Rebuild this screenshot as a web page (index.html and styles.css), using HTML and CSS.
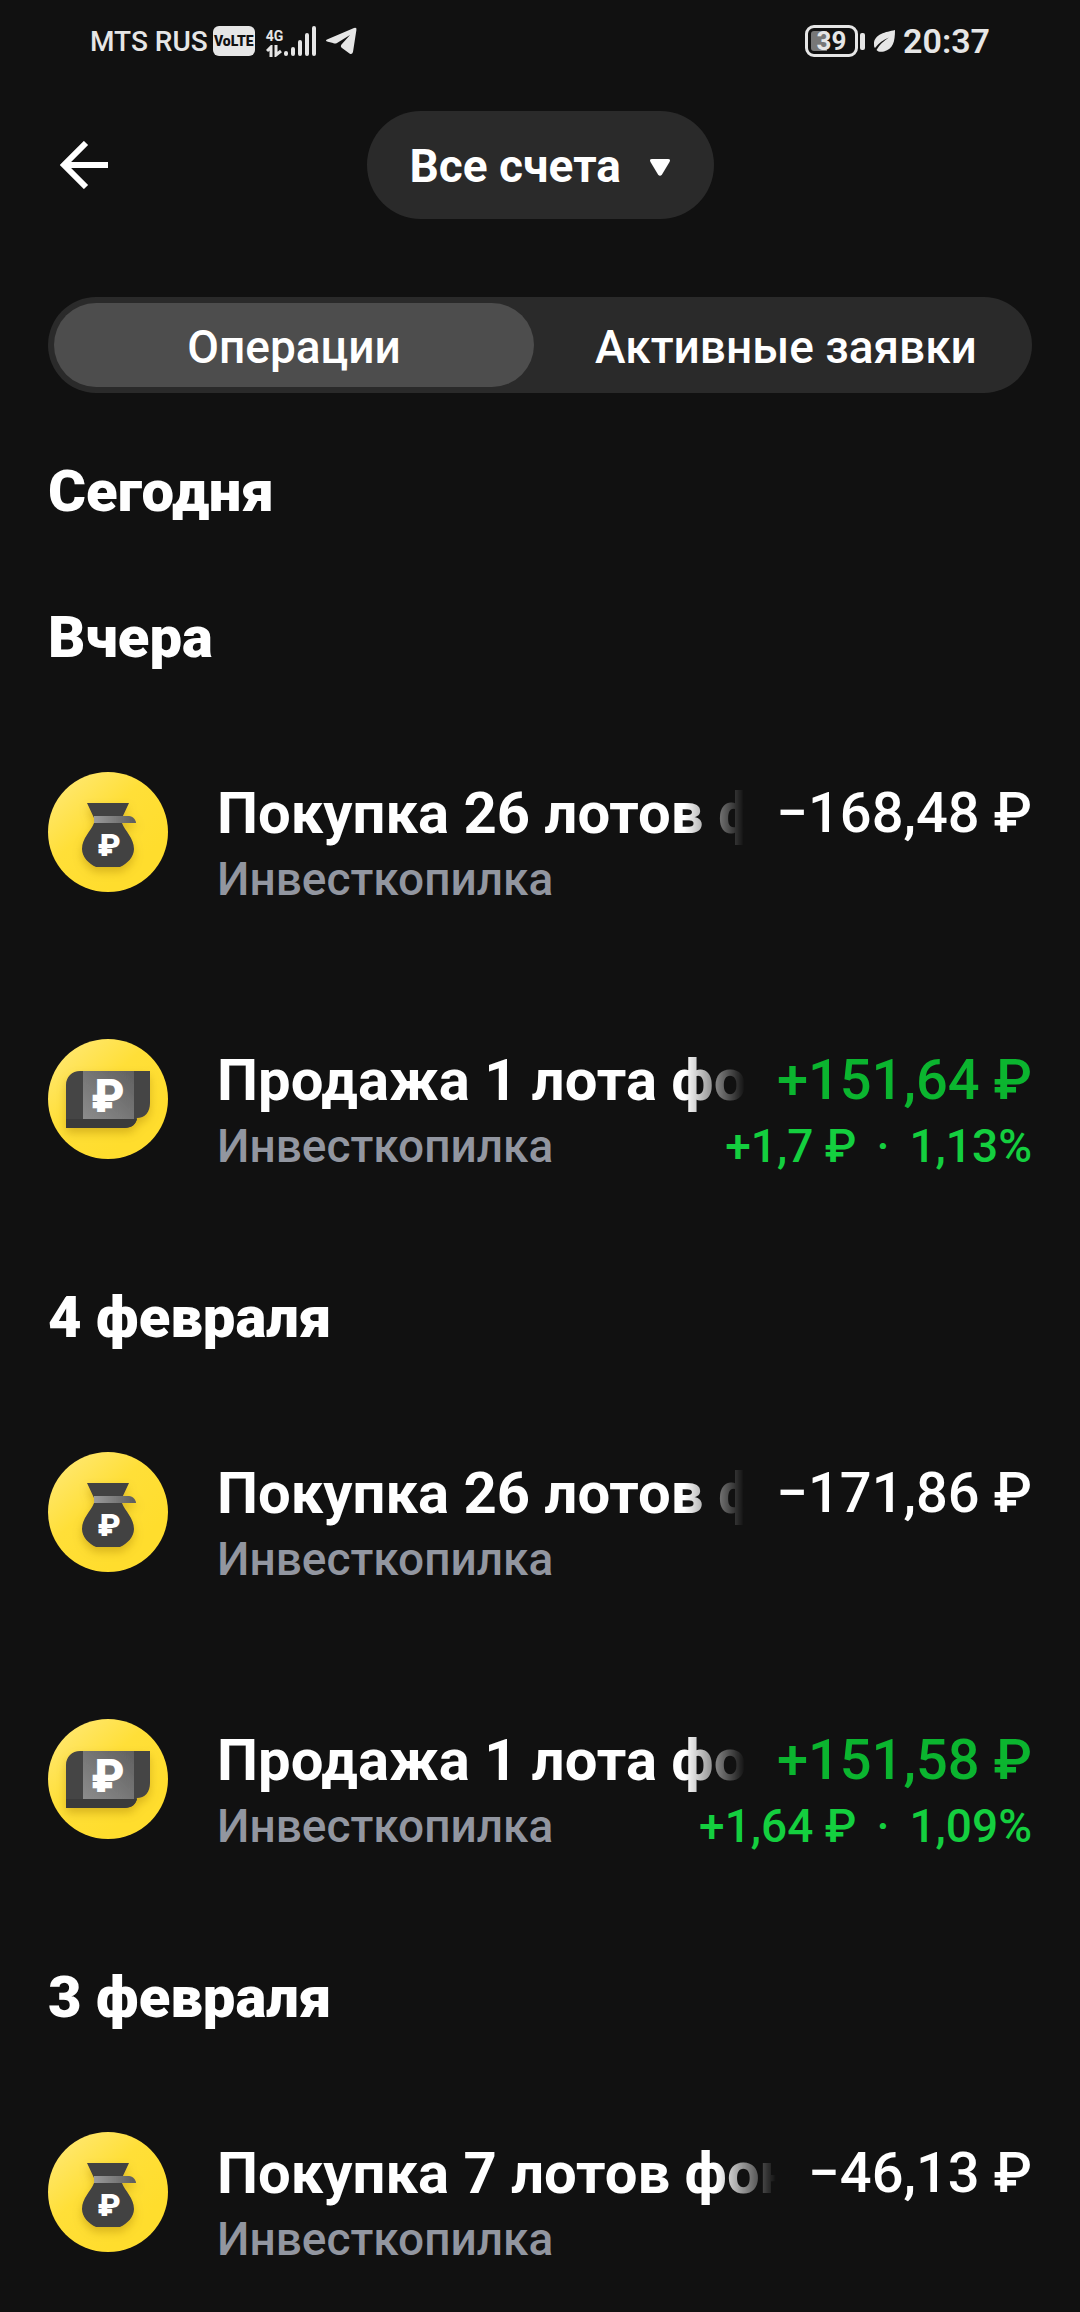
FILE: index.html
```
<!DOCTYPE html>
<html lang="ru">
<head>
  <meta charset="UTF-8" />
  <meta name="viewport" content="width=device-width, initial-scale=1.0"/>
  <title>Операции</title>
  <link rel="stylesheet" href="styles.css">
</head>
<body>

  <!-- Shared icons -->
  <svg class="sprite" aria-hidden="true">
    <defs>
      <linearGradient id="gold" x1="0" y1="0" x2="0.7" y2="0.8">
        <stop offset="0" stop-color="#ffea80"/>
        <stop offset="0.55" stop-color="#ffdf38"/>
        <stop offset="1" stop-color="#ffdd2d"/>
      </linearGradient>
      <linearGradient id="steel" x1="0" y1="0" x2="1" y2="0">
        <stop offset="0" stop-color="#9b9b9b"/>
        <stop offset="1" stop-color="#5c5c5c"/>
      </linearGradient>
      <linearGradient id="band" x1="0" y1="1" x2="1" y2="0">
        <stop offset="0" stop-color="#8c8c8c"/>
        <stop offset="1" stop-color="#606060"/>
      </linearGradient>
      <filter id="soft" x="-30%" y="-30%" width="160%" height="160%">
        <feDropShadow dx="0" dy="5" stdDeviation="5" flood-color="#a07800" flood-opacity="0.4"/>
      </filter>
    </defs>
    <symbol id="bag" viewBox="0 0 120 120">
      <circle cx="60" cy="60" r="60" fill="url(#gold)"/>
      <g filter="url(#soft)">
        <path d="M39 31H81L74 46V51C77 59 86 66 86 77C86 85 79 92 72 95H48C41 92 34 85 34 77C34 66 43 59 46 51V46Z" fill="#424242"/>
        <path d="M46 44H81C85 44 88 48 88 51H46Z" fill="url(#steel)"/>
      </g>
      <text x="61" y="84" class="coin coin-small">₽</text>
    </symbol>
    <symbol id="cash" viewBox="0 0 120 120">
      <circle cx="60" cy="60" r="60" fill="url(#gold)"/>
      <g filter="url(#soft)">
        <path d="M32 32H102V64C102 73 97 79 89 79C88 85 84 89 76 89H18V46C18 38 24 32 32 32Z" fill="#454545"/>
        <path d="M18 80H89C88 85 84 89 76 89H18Z" fill="#3b3b3b"/>
        <path d="M35 32H86V80H35Z" fill="url(#band)"/>
      </g>
      <text x="60" y="73" class="coin coin-large">₽</text>
    </symbol>
  </svg>

  <div class="status-bar">
    <div class="status-group">
      <span class="carrier">MTS RUS</span>
      <span class="volte">VoLTE</span>
      <div class="network">
        <div class="network-data">
          <span class="network-type">4G</span>
          <svg class="arrows" viewBox="0 0 16 12" fill="none" stroke="#e6e6e6" stroke-width="3"><path d="M1 6L5 2V12M10 0V10L15 6"/></svg>
        </div>
        <svg class="signal" viewBox="0 0 34 32" fill="none" stroke="#e6e6e6" stroke-width="4" stroke-linecap="round"><path d="M3 28V29M10 24V29M17 17V29M24 10V29M31 3V29"/></svg>
      </div>
      <svg class="telegram" viewBox="0 0 32 28"><path d="M2 12.500L29 1Q32 0 31.400 3L28 25Q27 28 24.500 26.500L17 21Q15 19.500 16.500 17.500L25 8L12 16Q10 17 8 16L2 14.500Q0 13.500 2 12.500Z" fill="#e6e6e6"/></svg>
    </div>
    <div class="status-group">
      <span class="battery">39</span>
      <span class="battery-tip"></span>
      <svg class="leaf" viewBox="0 0 22 24"><path d="M22 1C13 3 1 5 1 15C1 17 1 18 2 19C6 14 10 11 16 8.500C11 12 7 15 3.500 21C5 23 8 23 11 22.500C20 20 22 13 22 1Z" fill="#e6e6e6"/></svg>
      <span class="clock">20:37</span>
    </div>
  </div>

  <header>
    <button class="back" aria-label="Назад">
      <svg viewBox="0 0 48 48" fill="none" stroke="#fff" stroke-width="6"><path d="M48 24H5M26 2L4 24L26 46"/></svg>
    </button>
    <div class="account">
      <select class="account-select" aria-label="Счёт">
        <option>Все счета</option>
      </select>
      <svg class="account-arrow" viewBox="0 0 20 17"><path d="M2 0H18Q21 0 19.500 3L12 15.500Q10 18 8 15.500L0.500 3Q-1 0 2 0Z" fill="#fff"/></svg>
    </div>
  </header>

  <nav class="tabs" role="tablist">
    <button class="tab active" role="tab" aria-selected="true">Операции</button>
    <button class="tab" role="tab" aria-selected="false">Активные заявки</button>
  </nav>

  <main>
    <!-- Today -->
    <section>
      <h2>Сегодня</h2>
    </section>

    <!-- Yesterday -->
    <section>
      <h2>Вчера</h2>
      <div class="operation">
        <svg class="icon"><use href="#bag"/></svg>
        <div class="details">
          <div class="line">
            <span class="name">Покупка 26 лотов фонда</span>
            <span class="amount">−168,48 ₽</span>
          </div>
          <div class="line">
            <span class="source">Инвесткопилка</span>
          </div>
        </div>
      </div>
      <div class="operation">
        <svg class="icon"><use href="#cash"/></svg>
        <div class="details">
          <div class="line">
            <span class="name">Продажа 1 лота фонда</span>
            <span class="amount income">+151,64 ₽</span>
          </div>
          <div class="line">
            <span class="source">Инвесткопилка</span>
            <span class="profit"><span>+1,7 ₽</span><span>·</span><span>1,13%</span></span>
          </div>
        </div>
      </div>
    </section>

    <!-- 4 February -->
    <section>
      <h2>4 февраля</h2>
      <div class="operation">
        <svg class="icon"><use href="#bag"/></svg>
        <div class="details">
          <div class="line">
            <span class="name">Покупка 26 лотов фонда</span>
            <span class="amount">−171,86 ₽</span>
          </div>
          <div class="line">
            <span class="source">Инвесткопилка</span>
          </div>
        </div>
      </div>
      <div class="operation">
        <svg class="icon"><use href="#cash"/></svg>
        <div class="details">
          <div class="line">
            <span class="name">Продажа 1 лота фонда</span>
            <span class="amount income">+151,58 ₽</span>
          </div>
          <div class="line">
            <span class="source">Инвесткопилка</span>
            <span class="profit"><span>+1,64 ₽</span><span>·</span><span>1,09%</span></span>
          </div>
        </div>
      </div>
    </section>

    <!-- 3 February -->
    <section>
      <h2>3 февраля</h2>
      <div class="operation">
        <svg class="icon"><use href="#bag"/></svg>
        <div class="details">
          <div class="line">
            <span class="name">Покупка 7 лотов фонда</span>
            <span class="amount">−46,13 ₽</span>
          </div>
          <div class="line">
            <span class="source">Инвесткопилка</span>
          </div>
        </div>
      </div>
    </section>
  </main>

</body>
</html>
```
FILE: styles.css
```
* {
  margin: 0;
  padding: 0;
  box-sizing: border-box;
}

body {
  font-family: Roboto, 'Noto Sans', sans-serif;
  background-color: #111111;
  color: #ffffff;
  overflow-x: hidden;
}

button,
select {
  font-family: inherit;
  color: inherit;
  border: none;
  cursor: pointer;
}

.sprite {
  position: absolute;
  width: 0;
  height: 0;
}

.coin {
  font-family: Roboto, sans-serif;
  font-weight: 900;
  fill: #ffffff;
  text-anchor: middle;
}

.coin-small {
  font-size: 32px;
}

.coin-large {
  font-size: 46px;
}

/* Status bar */
.status-bar {
  display: flex;
  justify-content: space-between;
  align-items: center;
  height: 82px;
  padding: 0 90px;
  color: #e6e6e6;
}

.status-group {
  display: flex;
  align-items: center;
}

.carrier {
  font-size: 28px;
  font-weight: 500;
}

.volte {
  margin-left: 5px;
  width: 42px;
  border-radius: 6px;
  background-color: #e6e6e6;
  color: #111111;
  font-size: 14px;
  font-weight: 900;
  line-height: 30px;
  text-align: center;
}

.network {
  display: flex;
  align-items: flex-end;
  margin-left: 11px;
}

.network-data {
  display: flex;
  flex-direction: column;
  width: 17px;
}

.network-type {
  font-size: 14px;
  font-weight: 700;
  line-height: 18px;
}

.arrows {
  width: 16px;
  height: 12px;
}

.signal {
  width: 34px;
  height: 32px;
}

.telegram {
  margin-left: 8px;
  width: 32px;
  height: 28px;
}

.battery {
  width: 53px;
  border: 3px solid #e6e6e6;
  border-radius: 9px;
  background: linear-gradient(to right, #777777 16px, transparent 16px) no-repeat content-box;
  padding: 3px;
  font-size: 26px;
  font-weight: 700;
  line-height: 20px;
  text-align: center;
}

.battery-tip {
  margin-left: 2px;
  width: 5px;
  height: 17px;
  border-radius: 2px;
  background-color: #e6e6e6;
}

.leaf {
  margin: 0 8px;
  width: 22px;
  height: 24px;
}

.clock {
  font-size: 34px;
  font-weight: 600;
}

/* Header */
header {
  display: flex;
  justify-content: center;
  align-items: center;
  position: relative;
  height: 166px;
}

.back {
  position: absolute;
  left: 60px;
  width: 48px;
  height: 48px;
  background: none;
}

.back svg {
  display: block;
}

.account {
  position: relative;
}

.account-select {
  appearance: none;
  height: 108px;
  padding: 2px 92px 0 43px;
  border-radius: 54px;
  background-color: #2a2a2a;
  font-size: 46px;
  font-weight: 700;
}

.account-arrow {
  position: absolute;
  top: 48px;
  right: 44px;
  width: 20px;
  height: 17px;
  pointer-events: none;
}

/* Tabs */
.tabs {
  display: flex;
  gap: 12px;
  margin: 49px 48px 25px;
  padding: 6px;
  border-radius: 48px;
  background-color: #2a2a2a;
}

.tab {
  flex: 1;
  height: 84px;
  padding-top: 4px;
  border-radius: 42px;
  background: none;
  font-size: 46px;
  font-weight: 500;
}

.tab.active {
  background-color: #4d4d4d;
}

/* Operations */
section {
  padding: 0 48px;
}

h2 {
  font-size: 58px;
  font-weight: 900;
  line-height: 146px;
}

.operation {
  display: flex;
  gap: 49px;
  height: 267px;
  padding-top: 62px;
}

.icon {
  flex: none;
  width: 120px;
  height: 120px;
}

.details {
  flex: 1;
  min-width: 0;
  padding-top: 7px;
}

.line {
  display: flex;
  justify-content: space-between;
  white-space: nowrap;
}

.name {
  flex: 1;
  min-width: 0;
  margin-right: 32px;
  overflow: hidden;
  font-size: 58px;
  font-weight: 700;
  line-height: 68px;
  -webkit-mask-image: linear-gradient(to left, transparent, #000 60px);
  mask-image: linear-gradient(to left, transparent, #000 60px);
}

.amount {
  font-size: 56px;
  font-weight: 500;
  line-height: 68px;
}

.income {
  color: #0bb52f;
}

.source {
  color: #9296a0;
  font-size: 46px;
  font-weight: 500;
  line-height: 64px;
}

.profit {
  display: flex;
  gap: 20px;
  color: #14cf3f;
  font-size: 46px;
  font-weight: 500;
  line-height: 64px;
}
```
